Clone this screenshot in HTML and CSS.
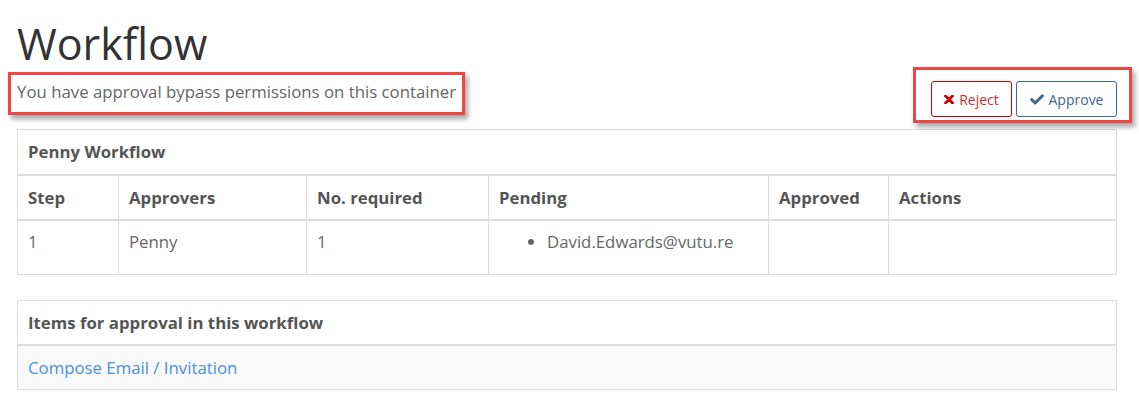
FILE: index.html
```html
<!DOCTYPE html>
<html>
<head>
<meta charset="utf-8">
<link rel="stylesheet" href="styles.css">
</head>
<body>
<div class="page">
  <h1 class="title">Workflow</h1>
  <div class="subrow">
    <p class="note">You have approval bypass permissions on this container</p>
    <div class="actions">
      <button class="btn btn-reject"><svg class="ico" viewBox="0 0 10 9"><path d="M1.5 1 L8.5 8 M8.5 1 L1.5 8" stroke="#cc0000" stroke-width="2.8" stroke-linecap="round"/></svg>Reject</button>
      <button class="btn btn-approve"><svg class="ico ico-check" viewBox="0 0 14 11"><path d="M1.8 5.6 L5.2 9 L12.4 1.8" fill="none" stroke="#3d6690" stroke-width="3" stroke-linecap="round" stroke-linejoin="round"/></svg>Approve</button>
    </div>
  </div>

  <table class="wf">
    <colgroup>
      <col style="width:101px"><col style="width:188px"><col style="width:182px"><col style="width:280px"><col style="width:120px"><col>
    </colgroup>
    <thead>
      <tr><th colspan="6" class="caption">Penny Workflow</th></tr>
      <tr><th>Step</th><th>Approvers</th><th>No. required</th><th>Pending</th><th>Approved</th><th>Actions</th></tr>
    </thead>
    <tbody>
      <tr>
        <td>1</td>
        <td>Penny</td>
        <td>1</td>
        <td><ul class="pending"><li>David.Edwards@vutu.re</li></ul></td>
        <td></td>
        <td></td>
      </tr>
    </tbody>
  </table>

  <div class="items">
    <div class="items-head">Items for approval in this workflow</div>
    <div class="items-body"><a href="#" class="item-link">Compose Email / Invitation</a></div>
  </div>

  <div class="annot annot-note"></div>
  <div class="annot annot-btns"></div>
</div>
</body>
</html>
```

FILE: styles.css
```css
* { box-sizing: border-box; }
html, body { margin: 0; padding: 0; background: #fff; }
body {
  font-family: "Open Sans", "Liberation Sans", sans-serif;
  font-size: 16.8px;
  color: #666;
}
.page {
  position: relative;
  padding: 0 22px 0 17px;
  width: 1139px;
}
.title {
  margin: 0;
  padding-top: 18px;
  font-size: 43px;
  font-weight: 400;
  line-height: 52px;
  color: #333;
}
.subrow {
  display: flex;
  justify-content: space-between;
  align-items: flex-start;
  height: 59px;
}
.note {
  margin: 10px 0 0;
  font-size: 16.8px;
  line-height: 24px;
  color: #666;
}
.actions {
  display: flex;
  gap: 4px;
  margin-top: 11px;
}
.btn {
  display: flex;
  align-items: center;
  justify-content: center;
  height: 36px;
  font-family: "Open Sans", "Liberation Sans", sans-serif;
  font-size: 14px;
  background: #fff;
  border-radius: 3px;
  padding: 0 10px;
  gap: 5px;
}
.btn-reject { width: 81px; border: 1px solid #c00; color: #c9302c; }
.btn-approve { width: 101px; border: 1px solid #3d6690; color: #3d6690; }
.ico { width: 10px; height: 9px; }
.ico-check { width: 14px; height: 11px; }

.wf {
  width: 1100px;
  border-collapse: collapse;
  table-layout: fixed;
  border: 1px solid #ddd;
  font-size: 16.8px;
  color: #666;
}
.wf th {
  text-align: left;
  font-weight: 700;
  color: #555;
  font-size: 16.8px;
  padding: 0 10px;
  height: 45px;
  border: 1px solid #ddd;
  border-bottom: 2px solid #ddd;
}
.wf td {
  vertical-align: top;
  padding: 10px 10px 0;
  height: 55px;
  border: 1px solid #ddd;
  line-height: 22px;
}
.pending { margin: 0; padding-left: 48px; }
.pending li { line-height: 22px; }

.items {
  margin-top: 25px;
  width: 1100px;
  border: 1px solid #ddd;
}
.items-head {
  height: 45px;
  display: flex;
  align-items: center;
  padding: 0 10px;
  font-weight: 700;
  color: #555;
  font-size: 16.8px;
  border-bottom: 2px solid #ddd;
}
.items-body {
  height: 43px;
  display: flex;
  align-items: center;
  padding: 0 10px;
  background: #f9f9f9;
}
.item-link { color: #4a90e2; text-decoration: none; font-size: 16.8px; }

.annot {
  position: absolute;
  border: 3px solid #f04545;
  box-shadow: 3px 4px 5px rgba(0,0,0,0.35);
}
.annot-note { left: 8px; top: 72px; width: 457px; height: 43px; }
.annot-btns { left: 913px; top: 67px; width: 219px; height: 56px; }
```
